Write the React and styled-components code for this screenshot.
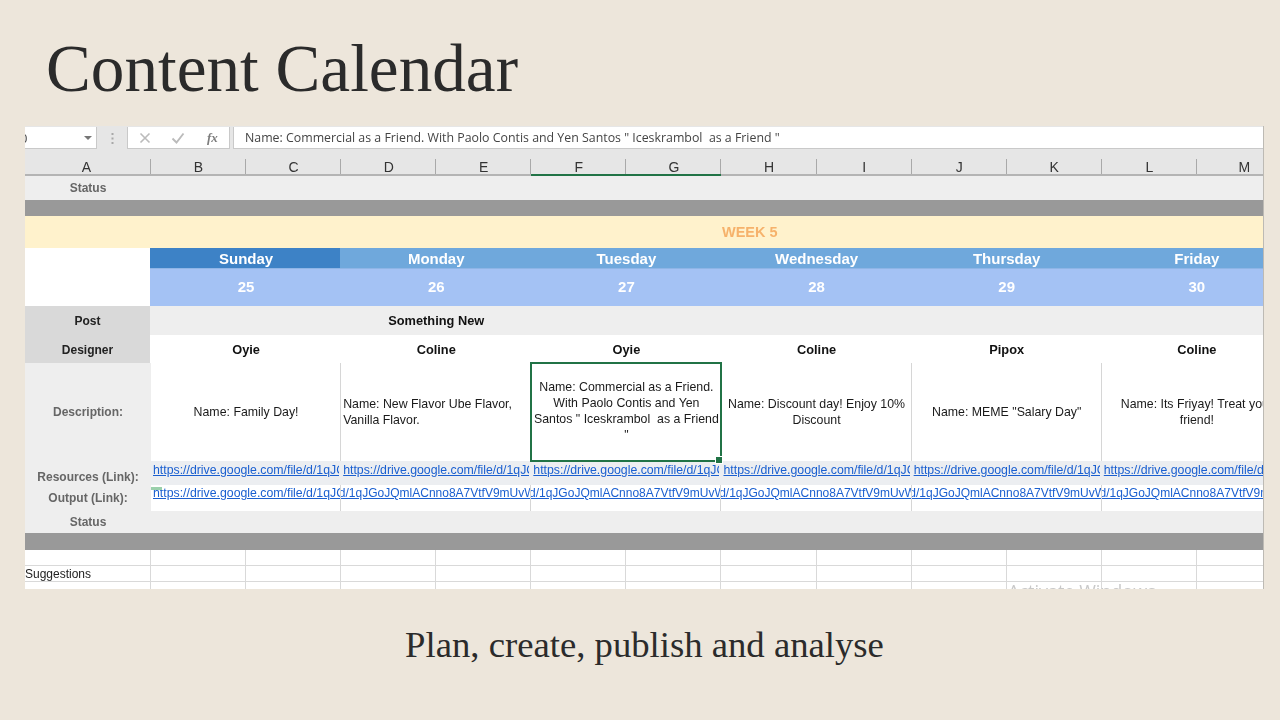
import React from 'react';
import styled, { createGlobalStyle } from 'styled-components';

const Global = createGlobalStyle`
  html, body { margin: 0; padding: 0; background: #ede6db; }
  * { box-sizing: border-box; }
`;

const Page = styled.div`
  width: 1280px;
  height: 720px;
  overflow: hidden;
  display: flex;
  flex-direction: column;
  background: #ede6db;
  color: #2b2b2b;
`;

const TitleBar = styled.header`
  height: 126px;
  padding: 11px 0 0 46px;
  display: flex;
  align-items: center;
`;

const Title = styled.h1`
  margin: 0;
  font: 400 67.2px/1 "Liberation Serif", serif;
`;

const Sheet = styled.section`
  position: relative;
  width: 1239px;
  height: 463px;
  margin-left: 25px;
  overflow: hidden;
  background: #fff;
  border-right: 1px solid #bdbab4;
  font-family: "Liberation Sans", Arial, sans-serif;
  filter: blur(0.4px);
`;

const FormulaBar = styled.div`
  height: 24px;
  padding: 1px 0;
  display: flex;
  background: #e6e6e6;
`;

const NameBox = styled.div`
  width: 72px;
  display: flex;
  align-items: center;
  justify-content: space-between;
  padding-right: 4px;
  background: #fff;
  border-right: 1px solid #c9c9c9;
  border-bottom: 1px solid #c9c9c9;
  font: 400 13px "Open Sans", sans-serif;
  color: #444;
  overflow: hidden;
`;

const NameText = styled.span`
  margin-left: -5px;
`;

const Caret = styled.span`
  width: 0;
  height: 0;
  border-left: 4px solid transparent;
  border-right: 4px solid transparent;
  border-top: 4px solid #767676;
`;

const Grip = styled.div`
  width: 30px;
  display: flex;
  align-items: center;
  justify-content: center;
`;

const ButtonGroup = styled.div`
  width: 103px;
  display: flex;
  align-items: center;
  background: #fff;
  border: 1px solid #c9c9c9;
  border-top: 0;
  color: #bbb;
`;

const IconSlot = styled.span`
  width: 34px;
  margin-left: ${p => p.$ml || 0}px;
  display: flex;
  justify-content: center;
  align-items: center;
`;

const Fx = styled.span`
  font: italic 700 13px "Liberation Serif", serif;
  color: #7d7d7d;
`;

const FormulaInput = styled.div`
  flex: 1;
  margin-left: 3px;
  padding-left: 11px;
  display: flex;
  align-items: center;
  background: #fff;
  border-left: 1px solid #c9c9c9;
  border-bottom: 1px solid #c9c9c9;
  font: 400 12.37px "Open Sans", sans-serif;
  color: #444;
  white-space: pre;
`;

const ColumnHeader = styled.div`
  height: 26px;
  display: grid;
  grid-template-columns: 126px repeat(12, 95.08px);
  background: #e6e6e6;
`;

const ColumnCell = styled.div`
  display: flex;
  align-items: flex-end;
  justify-content: center;
  padding-right: ${p => p.$pr || 0}px;
  font-size: 14px;
  line-height: 14px;
  color: #333;
  border-bottom: 2px solid ${p => (p.$active ? '#217346' : '#b4b4b4')};
  background-image: linear-gradient(#a9a9a9, #a9a9a9);
  background-size: 1px 15px;
  background-position: right bottom;
  background-repeat: no-repeat;
`;

const Row = styled.div`
  display: grid;
  grid-template-columns: ${p => p.$first || 126}px repeat(6, 190.16px);
  height: ${p => p.$h}px;
  background: ${p => p.$bg || 'transparent'};
`;

const Band = styled.div`
  height: ${p => p.$h}px;
  background: ${p => p.$bg};
`;

const WeekBand = styled.div`
  height: 32px;
  padding-left: 697px;
  display: flex;
  align-items: center;
  background: #fff2cc;
  font-size: 14.5px;
  font-weight: 700;
  color: #f6b26b;
`;

const Label = styled.div`
  display: flex;
  align-items: center;
  justify-content: center;
  padding-top: ${p => p.$pt || 0}px;
  background: ${p => p.$bg || '#eeeeee'};
  font-size: 12px;
  font-weight: 700;
  color: ${p => p.$color || '#666'};
`;

const Blank = styled.div`
  background: #fff;
`;

const DayCell = styled.div`
  display: flex;
  align-items: center;
  justify-content: center;
  padding: 1px 0 0 2px;
  background: ${p => (p.$active ? '#3d82c6' : '#6fa8dc')};
  font-size: 15px;
  font-weight: 700;
  color: #fff;
`;

const DateCell = styled.div`
  display: flex;
  align-items: center;
  justify-content: center;
  padding: 0 0 2px 2px;
  background: #a4c2f4;
  border-top: 1px solid #8fb5e6;
  font-size: 15px;
  font-weight: 700;
  color: #fff;
`;

const TextCell = styled.div`
  display: flex;
  align-items: center;
  justify-content: center;
  padding-left: 2px;
  font-size: 12.8px;
  font-weight: 700;
  color: #111;
`;

const Description = styled.div`
  position: relative;
  display: flex;
  align-items: center;
  justify-content: ${p => (p.$left ? 'flex-start' : 'center')};
  padding: 0 1px 0 2px;
  background: #fff;
  border-right: 1px solid #d6d6d6;
  font-size: 12.35px;
  line-height: 16px;
  color: #1a1a1a;
  text-align: ${p => (p.$left ? 'left' : 'center')};
  white-space: pre-wrap;

  ${p => p.$selected && `
    outline: 2px solid #217346;
    outline-offset: -1px;
    z-index: 2;
    &::after {
      content: "";
      position: absolute;
      right: -3px;
      bottom: -3px;
      width: 6px;
      height: 6px;
      background: #217346;
      border: 1px solid #fff;
    }
  `}
`;

const Inner = styled.span`
  display: block;
  transform: translateY(${p => p.$shift || 0}px);
`;

const ResourceCell = styled.a`
  display: block;
  padding: 1px 2px 0;
  overflow: hidden;
  white-space: nowrap;
  background: #eceef1;
  border-right: 2px solid #eceef1;
  font-size: 12.3px;
  line-height: 16px;
  color: #1a5fd0;
  text-decoration: underline;
`;

const OutputCell = styled.a`
  position: relative;
  display: flex;
  justify-content: ${p => (p.$start ? 'flex-start' : 'center')};
  padding: 0 2px;
  overflow: hidden;
  white-space: nowrap;
  background: #fff;
  border-right: 1px solid #d6d6d6;
  font-size: ${p => (p.$start ? 12.3 : 12)}px;
  line-height: 16px;
  color: #1a5fd0;
  text-decoration: underline;

  ${p => p.$start && `
    &::before {
      content: "";
      position: absolute;
      left: 0;
      top: 2px;
      width: 11px;
      height: 3px;
      background: #9ad0ac;
    }
  `}
`;

const EmptyRow = styled.div`
  display: grid;
  grid-template-columns: 126px repeat(12, 95.08px);
  height: ${p => p.$h}px;
  background: #fff;
  border-bottom: 1px solid #d9d9d9;
`;

const EmptyCell = styled.div`
  padding-top: 1px;
  border-right: 1px solid #d9d9d9;
  font-size: 12px;
  line-height: 15px;
  color: #222;
`;

const Watermark = styled.div`
  position: absolute;
  left: 983px;
  top: 456px;
  font: 400 18px/1 "Open Sans", sans-serif;
  color: #c9c9c9;
  white-space: nowrap;
`;

const Footer = styled.footer`
  flex: 1;
  padding-bottom: 18px;
  display: flex;
  align-items: center;
  justify-content: center;
`;

const Subtitle = styled.p`
  margin: 0;
  padding-left: 9px;
  font: 400 36.7px/1 "Liberation Serif", serif;
`;

const COLS = ['A', 'B', 'C', 'D', 'E', 'F', 'G', 'H', 'I', 'J', 'K', 'L', 'M'];
const DAYS = [
  { day: 'Sunday', date: 25, who: 'Oyie', text: 'Name: Family Day!' },
  { day: 'Monday', date: 26, who: 'Coline', text: 'Name: New Flavor Ube Flavor, Vanilla Flavor.', left: true },
  { day: 'Tuesday', date: 27, who: 'Oyie', text: 'Name: Commercial as a Friend. With Paolo Contis and Yen Santos " Iceskrambol  as a Friend "', selected: true },
  { day: 'Wednesday', date: 28, who: 'Coline', text: 'Name: Discount day! Enjoy 10% Discount' },
  { day: 'Thursday', date: 29, who: 'Pipox', text: 'Name: MEME "Salary Day"' },
  { day: 'Friday', date: 30, who: 'Coline', text: 'Name: Its Friyay! Treat your friend!' },
];
const URL = 'https://drive.google.com/file/d/1qJGoJQmlACnno8A7VtfV9mUvWm3XcQ_/view?usp=sharing';
const FORMULA = 'Name: Commercial as a Friend. With Paolo Contis and Yen Santos " Iceskrambol  as a Friend "';

const Cross = () => (
  <svg width="12" height="12" viewBox="0 0 12 12" fill="none" stroke="currentColor" strokeWidth="1.6">
    <path d="M1.5 1.5l9 9M10.5 1.5l-9 9" />
  </svg>
);
const Check = () => (
  <svg width="14" height="12" viewBox="0 0 14 12" fill="none" stroke="currentColor" strokeWidth="1.9">
    <path d="M1.5 6.5l4 4L12.5 1.5" />
  </svg>
);
const Dots = () => (
  <svg width="3" height="11" viewBox="0 0 3 11" fill="#a8a8a8">
    <rect x="0.5" y="0" width="2" height="2" />
    <rect x="0.5" y="4.5" width="2" height="2" />
    <rect x="0.5" y="9" width="2" height="2" />
  </svg>
);

export default function App() {
  return (
    <Page>
      <Global />
      <TitleBar>
        <Title>Content Calendar</Title>
      </TitleBar>

      <Sheet>
        <FormulaBar>
          <NameBox>
            <NameText>0</NameText>
            <Caret />
          </NameBox>
          <Grip><Dots /></Grip>
          <ButtonGroup>
            <IconSlot><Cross /></IconSlot>
            <IconSlot><Check /></IconSlot>
            <IconSlot $ml={1}><Fx>fx</Fx></IconSlot>
          </ButtonGroup>
          <FormulaInput>{FORMULA}</FormulaInput>
        </FormulaBar>

        <ColumnHeader>
          {COLS.map((c, i) => (
            <ColumnCell key={c} $pr={i === 0 ? 3 : 0} $active={c === 'F' || c === 'G'}>{c}</ColumnCell>
          ))}
        </ColumnHeader>

        <Row $h={24} $bg="#eeeeee">
          <Label>Status</Label>
        </Row>
        <Band $h={16} $bg="#999999" />
        <WeekBand>WEEK 5</WeekBand>

        <Row $h={20} $first={125}>
          <Blank />
          {DAYS.map((d, i) => <DayCell key={d.day} $active={i === 0}>{d.day}</DayCell>)}
        </Row>
        <Row $h={38} $first={125}>
          <Blank />
          {DAYS.map(d => <DateCell key={d.date}>{d.date}</DateCell>)}
        </Row>

        <Row $h={29} $first={125} $bg="#eeeeee">
          <Label $bg="#d9d9d9" $color="#222" $pt={1}>Post</Label>
          <TextCell />
          <TextCell>Something New</TextCell>
        </Row>
        <Row $h={28} $first={125} $bg="#ffffff">
          <Label $bg="#d9d9d9" $color="#222" $pt={2}>Designer</Label>
          {DAYS.map(d => <TextCell key={d.date}>{d.who}</TextCell>)}
        </Row>

        <Row $h={98}>
          <Label>Description:</Label>
          {DAYS.map(d => (
            <Description key={d.date} $left={d.left} $selected={d.selected}>
              <Inner $shift={d.selected ? -1 : 0}>{d.text}</Inner>
            </Description>
          ))}
        </Row>

        <Row $h={24}>
          <Label $pt={7}>Resources (Link):</Label>
          {DAYS.map(d => <ResourceCell key={d.date}>{URL}</ResourceCell>)}
        </Row>
        <Row $h={26}>
          <Label>Output (Link):</Label>
          {DAYS.map((d, i) => <OutputCell key={d.date} $start={i === 0}>{URL}</OutputCell>)}
        </Row>

        <Row $h={22} $bg="#eeeeee">
          <Label>Status</Label>
        </Row>
        <Band $h={17} $bg="#999999" />

        <EmptyRow $h={16}>
          {COLS.map(c => <EmptyCell key={c} />)}
        </EmptyRow>
        <EmptyRow $h={16}>
          {COLS.map((c, i) => <EmptyCell key={c}>{i === 0 ? 'Suggestions' : ''}</EmptyCell>)}
        </EmptyRow>
        <EmptyRow $h={16}>
          {COLS.map(c => <EmptyCell key={c} />)}
        </EmptyRow>

        <Watermark>Activate Windows</Watermark>
      </Sheet>

      <Footer>
        <Subtitle>Plan, create, publish and analyse</Subtitle>
      </Footer>
    </Page>
  );
}
